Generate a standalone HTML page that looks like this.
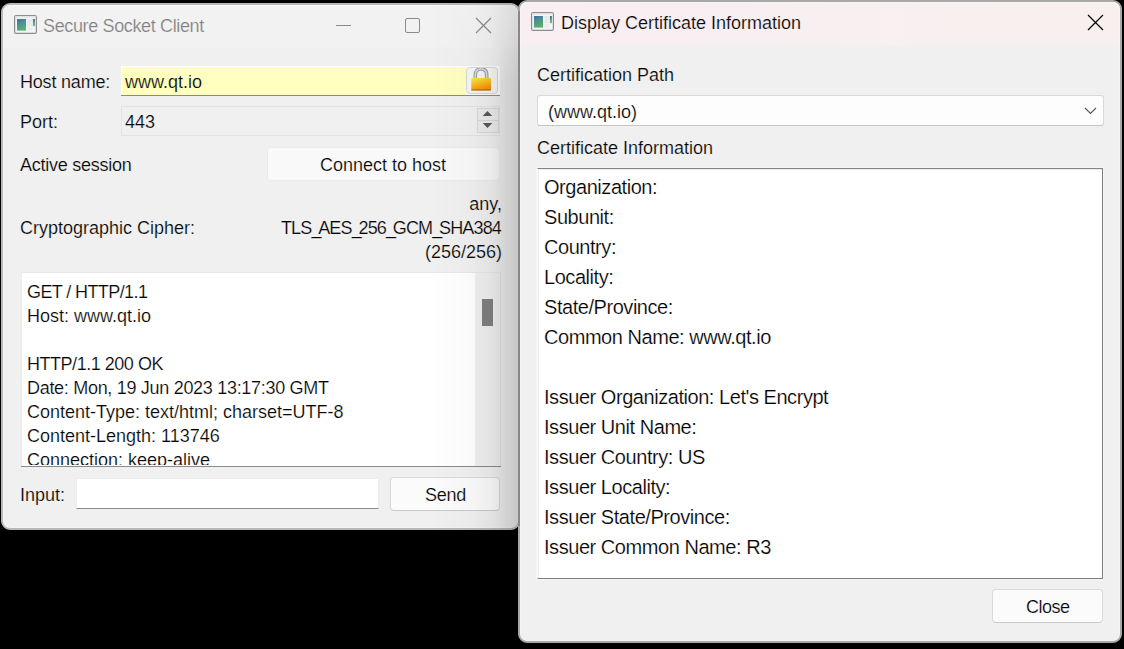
<!DOCTYPE html>
<html><head><meta charset="utf-8">
<style>
html,body{margin:0;padding:0;}
body{width:1124px;height:649px;background:#000;position:relative;overflow:hidden;font-family:"Liberation Sans",sans-serif;color:#000;}
.a{position:absolute;}
.t{position:absolute;white-space:pre;font-size:18px;line-height:24px;height:24px;-webkit-text-stroke:var(--sw) var(--sc,#f0f0f0);}
:root{--sw:0.2px;}
.c{position:absolute;left:6px;white-space:pre;font-size:20px;line-height:30px;height:30px;letter-spacing:-0.45px;-webkit-text-stroke:var(--sw) #fff;}
.win{position:absolute;box-sizing:border-box;border:2px solid #b4b4b4;border-radius:9px;overflow:hidden;background:#f0f0f0;}
.hl{position:absolute;left:0;top:0;right:0;bottom:0;border:1px solid rgba(255,255,255,0.3);border-radius:7px;}
</style></head><body>

<!-- LEFT WINDOW -->
<div class="win" id="lw" style="left:1px;top:3px;width:519px;height:527px;border-color:#b8b8b8;">
  <div class="a" style="left:0;top:0;width:519px;height:43px;background:#f2f2f2;"></div>
  <div class="hl"></div>
</div>
<svg class="a" style="left:14px;top:15px;" width="23" height="19" viewBox="0 0 23 19">
<defs><linearGradient id="g14" x1="0" y1="0" x2="0.3" y2="1"><stop offset="0" stop-color="#3f6f9a"/><stop offset="0.35" stop-color="#4a8a98"/><stop offset="1" stop-color="#5aae6e"/></linearGradient>
<linearGradient id="h14" x1="0" y1="0" x2="0" y2="1"><stop offset="0" stop-color="#3f6a90"/><stop offset="1" stop-color="#7ab890"/></linearGradient></defs>
<rect x="0.6" y="0.6" width="21.8" height="17.8" rx="1.5" fill="#f3f6f8" stroke="#8c8c8c" stroke-width="1.2"/>
<rect x="1.3" y="1.3" width="20.4" height="1.5" fill="#e4e6ea"/>
<rect x="3" y="4" width="9" height="11.6" fill="url(#g14)"/>
<rect x="13.3" y="4" width="4.5" height="7.2" fill="#e9e9e9"/>
<rect x="13.3" y="12.3" width="5" height="3.3" fill="#ececec"/>
<rect x="18.9" y="4" width="2" height="7.3" fill="url(#h14)"/>
</svg>
<div class="t" style="left:43px;top:14px;--sc:#f2f2f2;color:#7f7f7f;letter-spacing:-0.36px;">Secure Socket Client</div>
<!-- title buttons -->
<div class="a" style="left:336px;top:25px;width:15px;height:1px;background:#8a8a8a;"></div>
<div class="a" style="left:405px;top:18px;width:13px;height:13px;border:1px solid #8a8a8a;border-radius:2px;"></div>
<svg class="a" style="left:475px;top:17px;" width="17" height="17"><path d="M1 1L16 16M16 1L1 16" stroke="#8a8a8a" stroke-width="1.2"/></svg>

<div class="t" style="left:20px;top:70px;letter-spacing:-0.2px;">Host name:</div>
<div class="a" style="left:121px;top:66px;width:379px;height:30px;background:#fdfdfd;box-sizing:border-box;border-bottom:1px solid #8a8a8a;"></div>
<div class="a" style="left:122px;top:67px;width:344px;height:28px;background:#ffffc0;"></div>
<div class="t" style="left:125px;top:70px;--sc:#ffffc0;">www.qt.io</div>
<div class="a" style="left:466px;top:67px;width:32px;height:27px;box-sizing:border-box;border:1px solid #d9d9d9;border-radius:4px;background:#f6f6f6;"></div>

<svg class="a" style="left:470px;top:68px;" width="22" height="24" viewBox="0 0 22 24">
<defs><linearGradient id="lk" x1="0" y1="0" x2="0.4" y2="1"><stop offset="0" stop-color="#ffea50"/><stop offset="0.45" stop-color="#fcc424"/><stop offset="1" stop-color="#f68e10"/></linearGradient></defs>
<path d="M5.3 11V7C5.3 3 7.6 1 11 1S16.7 3 16.7 7V11" fill="none" stroke="#9ea2ae" stroke-width="3.6"/>
<path d="M5.3 11V7C5.3 3 7.6 1 11 1S16.7 3 16.7 7V11" fill="none" stroke="#dadce4" stroke-width="1.4"/>
<rect x="1.3" y="9.9" width="19.7" height="12.6" rx="1" fill="url(#lk)"/>
<rect x="1.3" y="21.2" width="19.7" height="1.4" fill="#a0600c" opacity="0.6"/>
</svg>
<div class="t" style="left:20px;top:110px;">Port:</div>
<div class="a" style="left:121px;top:106px;width:379px;height:30px;box-sizing:border-box;border:1px solid #e4e4e4;background:#f0f0f0;"></div>
<div class="t" style="left:125px;top:110px;">443</div>
<div class="a" style="left:477px;top:108px;width:22px;height:25px;box-sizing:border-box;border:1px solid #d9d9d9;background:#ececec;"></div>
<div class="a" style="left:477px;top:120px;width:22px;height:1px;background:#d9d9d9;"></div>
<svg class="a" style="left:482px;top:110px;" width="11" height="20" viewBox="0 0 11 20"><path d="M0.7 6L5.5 1L10.3 6Z M0.7 13L5.5 18L10.3 13Z" fill="#5a5a5a"/></svg>

<div class="t" style="left:20px;top:153px;letter-spacing:-0.25px;">Active session</div>
<div class="a" style="left:267px;top:147px;width:233px;height:34px;box-sizing:border-box;border:1px solid #ebebeb;border-radius:4px;background:#f9f9f9;"></div>
<div class="t" style="left:320px;top:153px;--sc:#f9f9f9;">Connect to host</div>

<div class="t" style="left:20px;top:216px;">Cryptographic Cipher:</div>
<div class="t" style="left:300px;top:192px;width:202px;text-align:right;">any,</div>
<div class="t" style="left:200px;top:216px;width:301px;text-align:right;letter-spacing:-0.85px;">TLS<span style="letter-spacing:-3.2px">_</span>AES<span style="letter-spacing:-3.2px">_</span>256<span style="letter-spacing:-3.2px">_</span>GCM<span style="letter-spacing:-3.2px">_</span>SHA384</div>
<div class="t" style="left:300px;top:240px;width:202px;text-align:right;">(256/256)</div>

<!-- log -->
<div class="a" style="left:21px;top:272px;width:480px;height:195px;background:#fff;box-sizing:border-box;border-bottom:1px solid #8a8a8a;overflow:hidden;">
  <div class="a" style="left:454px;top:0;width:26px;height:194px;background:#f0f0f0;box-sizing:border-box;border-right:1px solid #e2e2e2;"></div>
  <div class="a" style="left:0;top:0;width:480px;height:1px;background:#e8e8e8;"></div>
  <div class="a" style="left:0;top:0;width:1px;height:194px;background:#ececec;"></div>
  <div class="a" style="left:461px;top:27px;width:11px;height:27px;background:#808080;"></div>
</div>
<div class="a" style="left:21px;top:272px;width:454px;height:193px;overflow:hidden;">
  <div class="t" style="--sc:#fff;left:6px;top:8px;letter-spacing:-0.6px;">GET / HTTP/1.1</div>
  <div class="t" style="--sc:#fff;left:6px;top:32px;">Host: www.qt.io</div>
  <div class="t" style="--sc:#fff;left:6px;top:80px;letter-spacing:-0.47px;">HTTP/1.1 200 OK</div>
  <div class="t" style="--sc:#fff;left:6px;top:104px;letter-spacing:-0.3px;">Date: Mon, 19 Jun 2023 13:17:30 GMT</div>
  <div class="t" style="--sc:#fff;left:6px;top:128px;">Content-Type: text/html; charset=UTF-8</div>
  <div class="t" style="--sc:#fff;left:6px;top:152px;">Content-Length: 113746</div>
  <div class="t" style="--sc:#fff;left:6px;top:176px;">Connection: keep-alive</div>
</div>

<div class="t" style="left:20px;top:483px;">Input:</div>
<div class="a" style="left:76px;top:478px;width:303px;height:31px;box-sizing:border-box;background:#fff;border:1px solid #ececec;border-bottom:1px solid #8a8a8a;"></div>
<div class="a" style="left:390px;top:477px;width:110px;height:34px;box-sizing:border-box;border:1px solid #dadada;border-bottom-color:#cacaca;border-radius:4px;background:#fbfbfb;"></div>
<div class="t" style="left:425px;top:483px;--sc:#fbfbfb;letter-spacing:-0.3px;">Send</div>

<!-- RIGHT WINDOW -->
<div class="a" style="left:430px;top:3px;width:89px;height:527px;background:linear-gradient(to right,rgba(0,0,0,0) 0px,rgba(0,0,0,0.02) 40px,rgba(0,0,0,0.05) 60px,rgba(0,0,0,0.095) 70px,rgba(0,0,0,0.135) 80px,rgba(0,0,0,0.18) 89px);border-radius:0 9px 9px 0;-webkit-mask-image:linear-gradient(to bottom,rgba(0,0,0,0.55) 0px,rgba(0,0,0,0.75) 40px,#000 80px);"></div>
<div class="win" id="rw" style="left:518px;top:0px;width:604px;height:643px;border-color:#a8a8a8;">
  <div class="a" style="left:0;top:0;width:604px;height:43px;background:linear-gradient(to right,#f9eef2,#f8eff1 50%,#f8f0ee);"></div>
  <div class="hl"></div>
</div>
<div class="a" style="left:518px;top:11px;width:2px;height:515px;background:#878787;"></div>
<svg class="a" style="left:531px;top:12px;" width="23" height="19" viewBox="0 0 23 19">
<defs><linearGradient id="g531" x1="0" y1="0" x2="0.3" y2="1"><stop offset="0" stop-color="#3f6f9a"/><stop offset="0.35" stop-color="#4a8a98"/><stop offset="1" stop-color="#5aae6e"/></linearGradient>
<linearGradient id="h531" x1="0" y1="0" x2="0" y2="1"><stop offset="0" stop-color="#3f6a90"/><stop offset="1" stop-color="#7ab890"/></linearGradient></defs>
<rect x="0.6" y="0.6" width="21.8" height="17.8" rx="1.5" fill="#f3f6f8" stroke="#8c8c8c" stroke-width="1.2"/>
<rect x="1.3" y="1.3" width="20.4" height="1.5" fill="#e4e6ea"/>
<rect x="3" y="4" width="9" height="11.6" fill="url(#g531)"/>
<rect x="13.3" y="4" width="4.5" height="7.2" fill="#e9e9e9"/>
<rect x="13.3" y="12.3" width="5" height="3.3" fill="#ececec"/>
<rect x="18.9" y="4" width="2" height="7.3" fill="url(#h531)"/>
</svg>
<div class="t" style="left:561px;top:11px;--sc:#f8eff1;">Display Certificate Information</div>
<svg class="a" style="left:1087px;top:14px;" width="17" height="17"><path d="M1 1L16 16M16 1L1 16" stroke="#000" stroke-width="1.2"/></svg>

<div class="t" style="left:537px;top:63px;">Certification Path</div>
<div class="a" style="left:537px;top:95px;width:567px;height:31px;box-sizing:border-box;border:1px solid #d8d8d8;border-bottom-color:#c4c4c4;border-radius:3px;background:#fdfdfd;"></div>
<div class="t" style="left:548px;top:100px;--sc:#fdfdfd;">(www.qt.io)</div>
<svg class="a" style="left:1084px;top:106px;" width="13" height="9"><path d="M1 2L6.5 7.5L12 2" fill="none" stroke="#555" stroke-width="1.1"/></svg>

<div class="t" style="left:537px;top:136px;">Certificate Information</div>
<div class="a" style="left:537px;top:168px;width:566px;height:411px;box-sizing:border-box;background:#fff;border-top:1px solid #858585;border-left:1px solid #fafafa;border-right:1px solid #7f7f7f;border-bottom:1px solid #7f7f7f;box-shadow:inset 1px 1px 0 #ececec,0 0 0 1px #f5f5f5;"></div>

<div class="a" style="left:538px;top:169px;width:564px;height:408px;overflow:hidden;">
  <div class="c" style="top:3px;">Organization:</div>
  <div class="c" style="top:33px;">Subunit:</div>
  <div class="c" style="top:63px;">Country:</div>
  <div class="c" style="top:93px;">Locality:</div>
  <div class="c" style="top:123px;">State/Province:</div>
  <div class="c" style="top:153px;">Common Name: www.qt.io</div>
  <div class="c" style="top:213px;">Issuer Organization: Let's Encrypt</div>
  <div class="c" style="top:243px;">Issuer Unit Name:</div>
  <div class="c" style="top:273px;">Issuer Country: US</div>
  <div class="c" style="top:303px;">Issuer Locality:</div>
  <div class="c" style="top:333px;">Issuer State/Province:</div>
  <div class="c" style="top:363px;">Issuer Common Name: R3</div>
</div>

<div class="a" style="left:992px;top:589px;width:111px;height:34px;box-sizing:border-box;border:1px solid #dadada;border-bottom-color:#cacaca;border-radius:4px;background:#fbfbfb;"></div>
<div class="t" style="left:1026px;top:595px;--sc:#fbfbfb;letter-spacing:-0.5px;">Close</div>

</body></html>
